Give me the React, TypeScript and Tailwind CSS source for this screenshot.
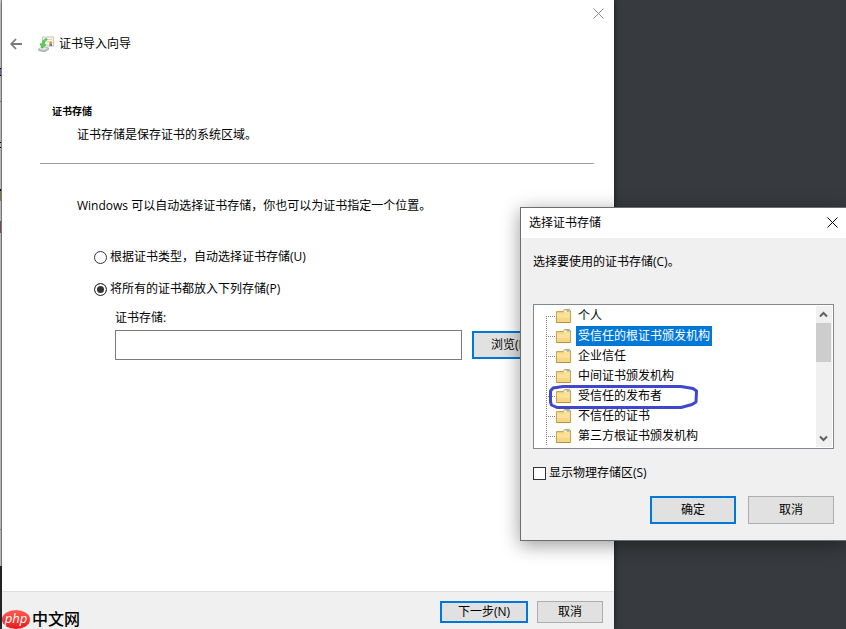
import { useState } from 'react';
import { clsx } from 'clsx';

interface Store {
  id: string;
  name: string;
  circled?: boolean;
}

const stores: Store[] = [
  { id: 'my', name: '个人' },
  { id: 'root', name: '受信任的根证书颁发机构' },
  { id: 'trust', name: '企业信任' },
  { id: 'ca', name: '中间证书颁发机构' },
  { id: 'publisher', name: '受信任的发布者', circled: true },
  { id: 'disallowed', name: '不信任的证书' },
  { id: 'authroot', name: '第三方根证书颁发机构' },
];

const buttonBase = 'shrink-0 border bg-[#e1e1e1] text-center whitespace-nowrap';
const buttonDefault = 'border-2 border-[#0078d7]';
const buttonPlain = 'border-[#adadad]';

const radioClass =
  'size-[13px] shrink-0 appearance-none rounded-full border border-[#333] bg-white checked:bg-[#333] checked:shadow-[inset_0_0_0_2px_white]';

function CloseIcon({ className }: { className: string }) {
  return (
    <svg viewBox="0 0 11 11" className={clsx('size-[11px]', className)} fill="none" stroke="currentColor">
      <path d="M.5.5l10 10M10.5.5l-10 10" />
    </svg>
  );
}

function BackIcon() {
  return (
    <svg viewBox="0 0 12 12" className="h-3 w-3" fill="none" stroke="#7a7a7a" strokeWidth="1.8">
      <path d="M12 6H1.5M6 1L1.2 6 6 11" />
    </svg>
  );
}

function CertificateIcon() {
  return (
    <svg viewBox="0 0 16 16" className="size-4">
      <rect x="4.5" y="1" width="11" height="9" fill="#f7f4ea" stroke="#cfc6b4" />
      <path d="M9 3.500h5M9 5.500h2" stroke="#d8d4ca" />
      <path d="M11.500 8v2.500l1.200-1 1.300 1V8z" fill="#3f6fc4" />
      <circle cx="12.600" cy="6.800" r="1.600" fill="#e79a1c" />
      <path d="M.5 13l3.500-2 6.500.8v1.700L6.500 16 .5 14.600z" fill="#b9bcbd" stroke="#8d9192" strokeWidth=".5" />
      <path d="M.8 12.900l3.500-1.700 5.700.8-3.800 1.900z" fill="#e6e8e8" />
      <path d="M8.500 2.200C5.600 3.200 4.200 5.200 4 8L2 7.700l2 4.500 4.300-3.500-2-.3c.1-1.900 1-3.600 2.900-4.600z" fill="#55d44f" stroke="#2fa52f" strokeWidth=".5" />
    </svg>
  );
}

function FolderIcon() {
  return (
    <svg viewBox="0 0 15 14" className="mb-px h-[14px] w-[15px]">
      <path d="M.5 2.500h7l1-2h5l1 1v12H.5z" fill="#f0d27c" stroke="#c9a455" />
      <path d="M8.500 1.500h4.500v2H8z" fill="#f8f6ea" />
      <path d="M10.500 1.500h3v1h-3z" fill="#3d97dd" />
      <path d="M1 4.500h7l1-1h5v9.500H1z" fill="#fbe197" />
      <path d="M1 9h13v4H1z" fill="#f6d682" />
      <path d="M.5 13.500h14" stroke="#b98e45" />
    </svg>
  );
}

// dotted connector of the tree, the first row has nothing above it
function Branch({ first }: { first: boolean }) {
  return (
    <svg viewBox="0 0 10 20" className="h-5 w-[10px]" stroke="#808080" strokeDasharray="1 1" shapeRendering="crispEdges">
      <path d={first ? 'M.5 10v10' : 'M.5 0v20'} />
      <path d="M0 10.500h10" />
    </svg>
  );
}

function HandCircle() {
  return (
    <svg
      viewBox="0 0 152 26"
      className="pointer-events-none absolute -top-[2px] left-[13px] z-10 h-[26px] w-[152px]"
      fill="none"
      stroke="#3f48cc"
      strokeWidth="3"
      strokeLinejoin="round"
    >
      <path d="M2.500 7L5 4l10-1.500h118L145 4.500l3.500 2.500-.5 11-4 2.500-11 3H9l-5.500-2.500-1-3z" />
    </svg>
  );
}

function ChevronIcon({ down = false }: { down?: boolean }) {
  return (
    <svg viewBox="0 0 9 7" className="h-[7px] w-[9px]" fill="none" stroke="#606060" strokeWidth="2">
      <path d={down ? 'M1 1.500l3.500 3.500L8 1.500' : 'M1 5.500L4.500 2 8 5.500'} />
    </svg>
  );
}

// sliver of the window that lies behind the wizard
function BackgroundWindow() {
  return (
    <div className="flex w-[2px] shrink-0 flex-col border-r border-[#a0a0a0] bg-[#e0e0e0]">
      <span className="mt-[68px] h-2 border-y border-black bg-[#6f7fd8]" />
      <span className="mt-[25px] h-px bg-[#909090]" />
      <span className="mt-[40px] h-[6px] border-y border-black" />
      <span className="mt-[41px] h-3 border-t-2 border-black bg-[#a09560]" />
      <span className="mt-5 h-3 bg-[#a05a60]" />
      <span className="mt-[296px] h-px bg-[#a0a0a0]" />
      <span className="mt-9 -mr-px flex-1 bg-[#2c3033]" />
    </div>
  );
}

function Watermark() {
  return (
    <div className="absolute bottom-0 left-0 flex h-5 items-center gap-[2px] pl-[2px]">
      <span className="flex h-[19px] w-7 items-center justify-center rounded-[50%] bg-linear-to-b from-[#ff5a50] to-[#e8101c] pb-[2px] text-[13px] leading-none font-medium text-white italic">
        php
      </span>
      <span className="pb-px text-[16px] leading-none font-medium">中文网</span>
    </div>
  );
}

function StoreDialog() {
  const [selected, setSelected] = useState('root');

  return (
    <div
      role="dialog"
      aria-label="选择证书存储"
      className="absolute top-[207px] right-0 w-[326px] border-y border-l border-[#6b6e70] bg-[#f0f0f0] shadow-[0_4px_18px_rgba(0,0,0,0.4)]"
    >
      <div className="flex h-[30px] items-center justify-between bg-white pr-2 pl-2">
        <h2>选择证书存储</h2>
        <button type="button" aria-label="关闭" className="pb-[2px]">
          <CloseIcon className="text-black" />
        </button>
      </div>

      <div className="px-3 pt-3 pb-4">
        <p className="leading-6">选择要使用的证书存储(C)。</p>

        <div className="mt-[30px] flex h-[145px] border border-[#828790] bg-white p-px">
          <ul role="tree" className="flex-1">
            {stores.map((store, index) => (
              <li
                key={store.id}
                role="treeitem"
                aria-selected={selected === store.id}
                onClick={() => setSelected(store.id)}
                className="relative flex h-5 items-center pl-[11px]"
              >
                <Branch first={index === 0} />
                <FolderIcon />
                <span
                  className={clsx(
                    'ml-[5px] px-[2px] leading-5 whitespace-nowrap',
                    selected === store.id && 'bg-[#0078d7] text-white'
                  )}
                >
                  {store.name}
                </span>
                {store.circled && <HandCircle />}
              </li>
            ))}
          </ul>
          <div className="flex w-4 flex-col bg-[#f0f0f0]">
            <button type="button" aria-label="向上滚动" className="flex h-[17px] items-center justify-center pr-[2px]">
              <ChevronIcon />
            </button>
            <div className="mr-px h-[39px] bg-[#cdcdcd]" />
            <button
              type="button"
              aria-label="向下滚动"
              className="mt-auto flex h-[17px] items-center justify-center pr-[2px]"
            >
              <ChevronIcon down />
            </button>
          </div>
        </div>

        <label className="mt-3 flex items-center gap-[3px] leading-6">
          <input
            type="checkbox"
            className="size-[13px] appearance-none border border-[#333] bg-white checked:bg-[#333] checked:shadow-[inset_0_0_0_2px_white]"
          />
          显示物理存储区(S)
        </label>

        <div className="mt-[11px] flex justify-end gap-3">
          <button type="button" className={clsx(buttonBase, buttonDefault, 'h-7 w-[86px]')}>
            确定
          </button>
          <button type="button" className={clsx(buttonBase, buttonPlain, 'h-7 w-[86px]')}>
            取消
          </button>
        </div>
      </div>
    </div>
  );
}

export default function App() {
  const [mode, setMode] = useState<'auto' | 'manual'>('manual');

  return (
    <div className="relative flex min-h-screen overflow-hidden bg-[#373b3f] pr-[232px] font-['Open_Sans','Noto_Sans_CJK_SC',sans-serif] text-[12px] leading-4 text-black">
      <BackgroundWindow />

      <main className="flex flex-1 flex-col bg-white shadow-[0_0_6px_rgba(0,0,0,0.6)]">
        <div className="flex h-[26px] items-center justify-end pr-[10px]">
          <button type="button" aria-label="关闭">
            <CloseIcon className="text-[#888]" />
          </button>
        </div>

        <header className="flex h-9 items-center pl-2">
          <button type="button" aria-label="返回" className="mr-4">
            <BackIcon />
          </button>
          <CertificateIcon />
          <h1 className="ml-[5px] leading-5">证书导入向导</h1>
        </header>

        <section className="mx-[38px] mr-5 border-b border-[#a0a0a0] pt-[37px] pb-4 leading-6">
          <h2 className="pl-3 text-[10px] leading-6 font-bold">证书存储</h2>
          <p className="pl-[37px]">证书存储是保存证书的系统区域。</p>
        </section>

        <form className="pt-[30px] pr-14 pb-8 pl-[75px] leading-6">
          <p>Windows 可以自动选择证书存储，你也可以为证书指定一个位置。</p>

          <label className="mt-[27px] flex items-center gap-[3px] pl-[17px]">
            <input
              type="radio"
              name="mode"
              checked={mode === 'auto'}
              onChange={() => setMode('auto')}
              className={radioClass}
            />
            根据证书类型，自动选择证书存储(U)
          </label>
          <label className="mt-2 flex items-center gap-[3px] pl-[17px]">
            <input
              type="radio"
              name="mode"
              checked={mode === 'manual'}
              onChange={() => setMode('manual')}
              className={radioClass}
            />
            将所有的证书都放入下列存储(P)
          </label>

          <div className="mt-[5px] pl-[38px]">
            <label htmlFor="store" className="block">
              证书存储:
            </label>
            <div className="flex items-center gap-[10px]">
              <input id="store" type="text" className="h-[30px] min-w-0 flex-1 border border-[#7a7a7a] bg-white px-1" />
              <button type="button" className={clsx(buttonBase, buttonDefault, 'h-7 w-[86px]')}>
                浏览(R)...
              </button>
            </div>
          </div>
        </form>

        <footer className="mt-auto flex h-[38px] items-start justify-end gap-[9px] border-t border-[#dfdfdf] bg-[#f0f0f0] pt-[9px] pr-[11px]">
          <button type="button" className={clsx(buttonBase, buttonDefault, 'h-[22px] w-[88px]')}>
            下一步(N)
          </button>
          <button type="button" className={clsx(buttonBase, buttonPlain, 'h-[22px] w-[66px]')}>
            取消
          </button>
        </footer>
      </main>

      <StoreDialog />
      <Watermark />
    </div>
  );
}
